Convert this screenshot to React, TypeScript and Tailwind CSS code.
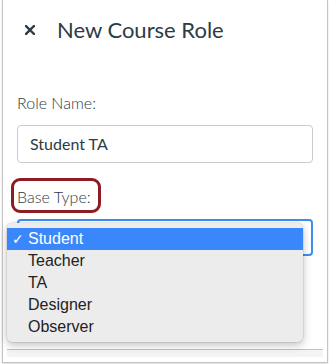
import React from "react";

const items = ["Student", "Teacher", "TA", "Designer", "Observer"];

export default function App() {
  return (
    <div className="w-[329px] h-[364px] bg-white overflow-hidden">
      <div className="relative ml-[2px] w-[326px] h-[363px] border-x border-b border-[#c4c4c4] bg-white shadow-[0_1px_2px_rgba(0,0,0,0.15)]">
        {/* Header */}
        <div className="flex items-center pt-[16px] pl-[22px]" style={{ fontFamily: "Lato, 'Noto Sans', sans-serif" }}>
          <svg width="10" height="10" viewBox="0 0 10 10" className="shrink-0">
            <path d="M1 1 L9 9 M9 1 L1 9" stroke="#2d3b45" strokeWidth="2.4" strokeLinecap="square" />
          </svg>
          <div className="ml-[22px] text-[22px] leading-[28px] text-[#2d3b45]">New Course Role</div>
        </div>

        {/* Form */}
        <div className="pl-[14px]" style={{ fontFamily: "Lato, 'Noto Sans', sans-serif" }}>
          <div className="mt-[47px] text-[16px] leading-[24px] font-light text-[#2d3b45]">Role Name:</div>
          <div className="mt-[10px] w-[296px] h-[38px] border border-[#c7cdd1] rounded-[4px] flex items-center pl-[12px] text-[16px] leading-[24px] text-[#2d3b45]">
            Student TA
          </div>
          <div className="mt-[22px] text-[16px] leading-[24px] font-light text-[#2d3b45]">Base Type:</div>
          <div className="mt-[10px] w-[296px] h-[37px] border-2 border-[#3d8ef2] rounded-[4px] bg-white" />
        </div>

        {/* Bottom rule */}
        <div className="mt-[93px] mx-[4px] border-t border-[#c2c2c2] h-[8px] bg-[#f4f4f4]" />

        {/* Red annotation */}
        <div className="absolute left-[8px] top-[178px] w-[90px] h-[35px] border-[3px] border-[#8e1c22] rounded-[9px]" />

        {/* Dropdown menu */}
        <div
          className="absolute left-[4px] top-[223px] w-[296px] pt-[5px] pb-[4px] bg-[#ececec] rounded-[5px] shadow-[0_3px_8px_rgba(0,0,0,0.25),0_0_0_0.5px_rgba(0,0,0,0.12)]"
          style={{ fontFamily: "'Liberation Sans', Arial, sans-serif" }}
        >
          {items.map((it, i) => (
            <div
              key={it}
              className={
                i === 0
                  ? "flex items-center h-[22px] pl-[5px] bg-[#3a87fb] text-white text-[16px]"
                  : "flex items-center h-[22px] pl-[5px] text-[#222222] text-[16px]"
              }
            >
              <span className="w-[16px] text-[14px]" style={{ fontFamily: "'DejaVu Sans', sans-serif" }}>
                {i === 0 ? "✓" : ""}
              </span>
              <span>{it}</span>
            </div>
          ))}
        </div>
      </div>
    </div>
  );
}
